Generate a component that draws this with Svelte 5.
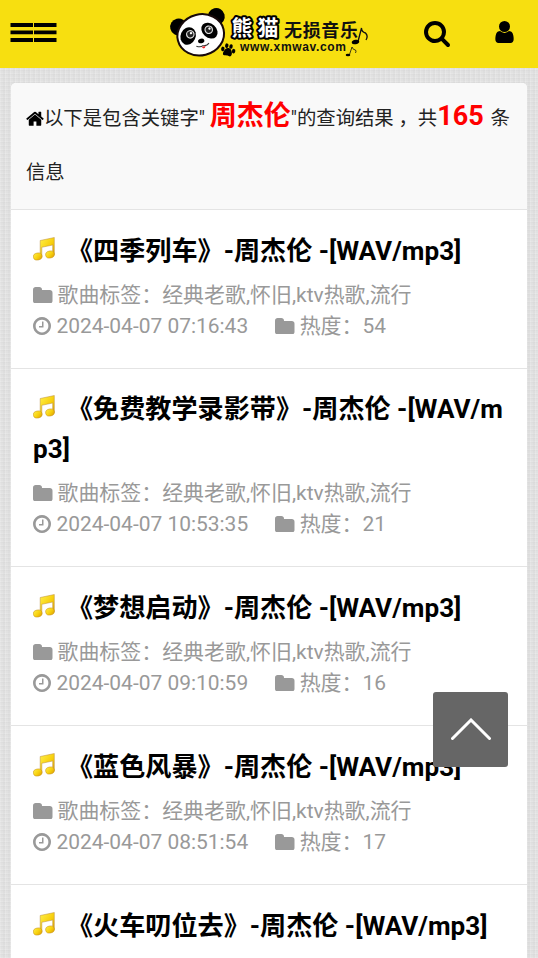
<script>
  const keyword = '周杰伦';
  const songs = [
    { name: '四季列车', time: '2024-04-07 07:16:43', heat: 54 },
    { name: '免费教学录影带', time: '2024-04-07 10:53:35', heat: 21 },
    { name: '梦想启动', time: '2024-04-07 09:10:59', heat: 16 },
    { name: '蓝色风暴', time: '2024-04-07 08:51:54', heat: 17 },
    { name: '火车叨位去' }
  ];
  const icons = {
    search: 'M1216 832q0-185-131.500-316.500t-316.500-131.500-316.500 131.500-131.500 316.500 131.500 316.500 316.500 131.500 316.500-131.500 131.500-316.500zm512 832q0 52-38 90t-90 38q-54 0-90-38l-343-342q-179 124-399 124-143 0-273.500-55.500t-225-150-150-225-55.500-273.500 55.500-273.500 150-225 225-150 273.500-55.500 273.500 55.500 225 150 150 225 55.500 273.500q0 220-124 399l343 343q37 37 37 90z',
    user: 'M1536 1399q0 109-62.500 187t-150.500 78h-854q-88 0-150.500-78t-62.500-187q0-85 8.500-160.500t31.500-152 58.500-131 94-89 134.500-34.500q131 128 313 128t313-128q76 0 134.500 34.500t94 89 58.500 131 31.500 152 8.500 160.500zm-256-887q0 159-112.500 271.500t-271.500 112.500-271.500-112.500-112.500-271.500 112.500-271.500 271.500-112.500 271.500 112.500 112.500 271.500z',
    folder: 'M1728 608v704q0 92-66 158t-158 66h-1216q-92 0-158-66t-66-158v-960q0-92 66-158t158-66h320q92 0 158 66t66 158v32h672q92 0 158 66t66 158z',
    clock: 'M1024 544v448q0 14-9 23t-23 9h-320q-14 0-23-9t-9-23v-64q0-14 9-23t23-9h224v-352q0-14 9-23t23-9h64q14 0 23 9t9 23zm416 352q0-148-73-273t-198-198-273-73-273 73-198 198-73 273 73 273 198 198 273 73 273-73 198-198 73-273zm224 0q0 209-103 385.500t-279.500 279.500-385.500 103-385.500-103-279.500-279.500-103-385.500 103-385.500 279.500-279.500 385.500-103 385.500 103 279.500 279.500 103 385.500z',
    home: 'M1472 992v480q0 26-19 45t-45 19h-384v-384h-256v384h-384q-26 0-45-19t-19-45v-480q0-1 .5-3t.5-3l575-474 575 474q1 2 1 6zm223-69l-62 74q-8 9-21 11h-3q-13 0-21-7l-692-577-692 577q-12 8-24 7-13-2-21-11l-62-74q-8-10-7-23.500t11-21.500l719-599q32-26 76-26t76 26l244 204v-195q0-14 9-23t23-9h192q14 0 23 9t9 23v408l219 182q10 8 11 21.500t-7 23.500z'
  };
</script>

{#snippet icon(name, box, cls)}
  <svg class={cls} viewBox={box} aria-hidden="true"><path d={icons[name]} /></svg>
{/snippet}

<div class="page">
  <header>
    <button class="menu" aria-label="菜单">
      <svg viewBox="0 0 48 20">
        <g stroke="#000" stroke-width="3.8">
          <path d="M.5 2H23M24 2H46.500M.5 9.400H23M24 9.400H46.500M.5 17H23M24 17H46.500" />
        </g>
      </svg>
    </button>
    <svg class="logo" viewBox="0 0 204 60">
      <g transform="rotate(-14 34 34)">
        <circle cx="15" cy="22" r="8.500" />
        <circle cx="54" cy="21" r="8.500" />
        <ellipse cx="34.500" cy="35" rx="23.500" ry="20.500" fill="#fff" stroke="#170909" stroke-width="2" />
        <ellipse cx="22" cy="33" rx="7.500" ry="9" transform="rotate(38 22 33)" />
        <ellipse cx="44" cy="33" rx="7" ry="9" transform="rotate(-34 44 33)" />
        <g fill="#222" stroke="#ddd" stroke-width="1.200">
          <circle cx="24.500" cy="32" r="3.700" />
          <circle cx="43.500" cy="32" r="3.700" />
        </g>
        <circle cx="25.500" cy="31" r="1.200" fill="#fff" />
        <circle cx="44.500" cy="31" r="1.200" fill="#fff" />
        <ellipse cx="33.500" cy="41" rx="3.200" ry="2.300" />
        <path d="M27.500 45q4 2.500 6.500 1q4 1.500 6.500-1" fill="none" stroke="#333" />
        <path d="M32.500 47q2 4 4 0z" fill="#e22" />
      </g>
      <g transform="rotate(12 62 51)">
        <path d="M62 48c4 0 6 7 3 8q-3-1-6 0c-3 0-1-8 3-8z" />
        <ellipse cx="56.500" cy="50" rx="1.700" ry="2.300" />
        <ellipse cx="59.700" cy="46" rx="1.700" ry="2.300" />
        <ellipse cx="64" cy="46" rx="1.700" ry="2.300" />
        <ellipse cx="67.500" cy="50" rx="1.700" ry="2.300" />
      </g>
      <text class="brand" x="65.500" y="35" textLength="47">熊猫</text>
      <text class="tag" x="118" y="36.500" textLength="74">无损音乐</text>
      <text class="url" x="74" y="51" textLength="106">www.xmwav.com</text>
      <g fill="none" stroke="#111">
        <path d="M192 41.500L195.500 28q0 4 4 5q3 3 .5 7" stroke-width="1.300" />
        <path d="M183.500 54.500L186 47q1 3 3.500 3q1 1 0 3" stroke-width=".8" />
      </g>
      <ellipse cx="189.500" cy="42" rx="3.800" ry="2.200" transform="rotate(-12 189.500 42)" />
      <ellipse cx="182" cy="55" rx="2.300" ry="1.300" />
    </svg>
    <nav>
      <button aria-label="搜索">{@render icon('search', '64 128 1664 1664', 'search')}</button>
      <button aria-label="用户">{@render icon('user', '256 128 1280 1536', 'user')}</button>
    </nav>
  </header>

  <main>
    <h1>{@render icon('home', '64 192 1664 1408', 'home')}以下是包含关键字" <b>{keyword}</b>"的查询结果 ，共<b class="count">165</b> 条信息</h1>
    {#each songs as song}
      <article>
        <h2>
          <svg class="note" viewBox="0 0 22 24">
            <defs>
              <linearGradient id="gold" x1="0" y1="0" x2="1" y2="1">
                <stop offset="0" stop-color="#fff04a" />
                <stop offset=".55" stop-color="#f7cf0c" />
                <stop offset="1" stop-color="#d99a08" />
              </linearGradient>
            </defs>
            <path d="M7.200 3.500L21.300.5V17.500H19.700V8L8.800 10.300V20H7.200z" fill="url(#gold)" stroke="#b98a3a" stroke-width=".5" />
            <ellipse cx="4.700" cy="19.500" rx="4.400" ry="3.500" fill="url(#gold)" stroke="#c8921a" stroke-width=".5" transform="rotate(-12 4.700 19.500)" />
            <ellipse cx="17" cy="17.500" rx="4.400" ry="3.500" fill="url(#gold)" stroke="#c8921a" stroke-width=".5" transform="rotate(-12 17 17.500)" />
          </svg>《{song.name}》-{keyword} -[WAV/mp3]
        </h2>
        {#if song.time}
          <p>{@render icon('folder', '64 128 1664 1408', 'folder')}歌曲标签：经典老歌,怀旧,ktv热歌,流行</p>
          <p>{@render icon('clock', '128 128 1536 1536', 'clock')}{song.time}<span>{@render icon('folder', '64 128 1664 1408', 'folder')}热度：{song.heat}</span></p>
        {/if}
      </article>
    {/each}
  </main>

  <button class="top" aria-label="返回顶部">
    <svg viewBox="0 0 40 22"><path d="M1.500 20.500L20 2L38.500 20.500" /></svg>
  </button>
</div>

<style>
  .page {
    position: relative;
    height: 958px;
    overflow: hidden;
    background-color: #e1e1e1;
    background-image:
      repeating-linear-gradient(90deg, rgba(255, 255, 255, .15) 0 1px, transparent 1px 3px, rgba(0, 0, 0, .014) 3px 5px),
      repeating-linear-gradient(0deg, rgba(255, 255, 255, .15) 0 1px, transparent 1px 3px, rgba(0, 0, 0, .014) 3px 4px);
    font-family: Roboto, "Noto Sans CJK SC", sans-serif;
    color: #222;
  }
  button {
    display: flex;
    padding: 0;
    border: 0;
    background: none;
  }
  header {
    display: flex;
    align-items: flex-start;
    height: 68px;
    background: #f7df10;
  }
  .menu { width: 166px; padding: 23px 0 0 10px; box-sizing: border-box; }
  .menu svg { width: 48px; height: 20px; }
  .logo { width: 204px; height: 60px; }
  .brand {
    font: 700 21px "Noto Sans CJK SC", sans-serif;
    fill: #fff;
    stroke: #000;
    stroke-width: 4px;
    stroke-linejoin: round;
    paint-order: stroke;
  }
  .tag { font: 700 18px "Noto Sans CJK SC", sans-serif; fill: #111; }
  .url { font: 700 12px "Liberation Sans", sans-serif; fill: #111; }
  nav { display: flex; gap: 45px; padding: 21px 0 0 54px; }
  .search { width: 26px; height: 26px; }
  .user { width: 19px; height: 22px; }
  main {
    margin: 15px 11px 0;
    border-radius: 5px;
    overflow: hidden;
    background: #fff;
  }
  h1 {
    height: 126px;
    margin: 0;
    padding: 9px 15px 0;
    box-sizing: border-box;
    background: #f9f9f9;
    font-size: 19.350px;
    font-weight: 400;
    line-height: 54px;
    color: #222;
  }
  .home { width: 18px; height: 15.500px; vertical-align: -1px; fill: #000; }
  b { font-size: 27px; font-weight: 700; line-height: 1; color: #f00; }
  .count { margin-right: 2px; }
  article {
    border-top: 1px solid #e4e4e4;
    padding: 21.500px 22px 25.900px;
  }
  h2 {
    margin: 0 0 9px;
    font-size: 26.120px;
    font-weight: 700;
    line-height: 39.500px;
    color: #000;
    word-break: break-all;
  }
  .note { width: 22px; height: 24px; margin-right: 12px; vertical-align: -1px; }
  p {
    margin: 0;
    font-size: 20.950px;
    font-weight: 400;
    line-height: 31px;
    color: #999;
    white-space: nowrap;
  }
  p .folder { width: 19.500px; height: 16.500px; margin-right: 5px; vertical-align: -1px; }
  .clock { width: 18px; height: 18px; margin-right: 5.500px; vertical-align: -2px; }
  p span { margin-left: 27px; }
  svg { fill: currentColor; }
  header svg { fill: #000; }
  .top {
    position: absolute;
    right: 30px;
    bottom: 191.500px;
    width: 75px;
    height: 75px;
    align-items: center;
    justify-content: center;
    border-radius: 3px;
    background: #666;
  }
  .top svg { width: 40px; height: 22px; }
  .top path { fill: none; stroke: #fff; stroke-width: 3; stroke-linecap: round; }
</style>
